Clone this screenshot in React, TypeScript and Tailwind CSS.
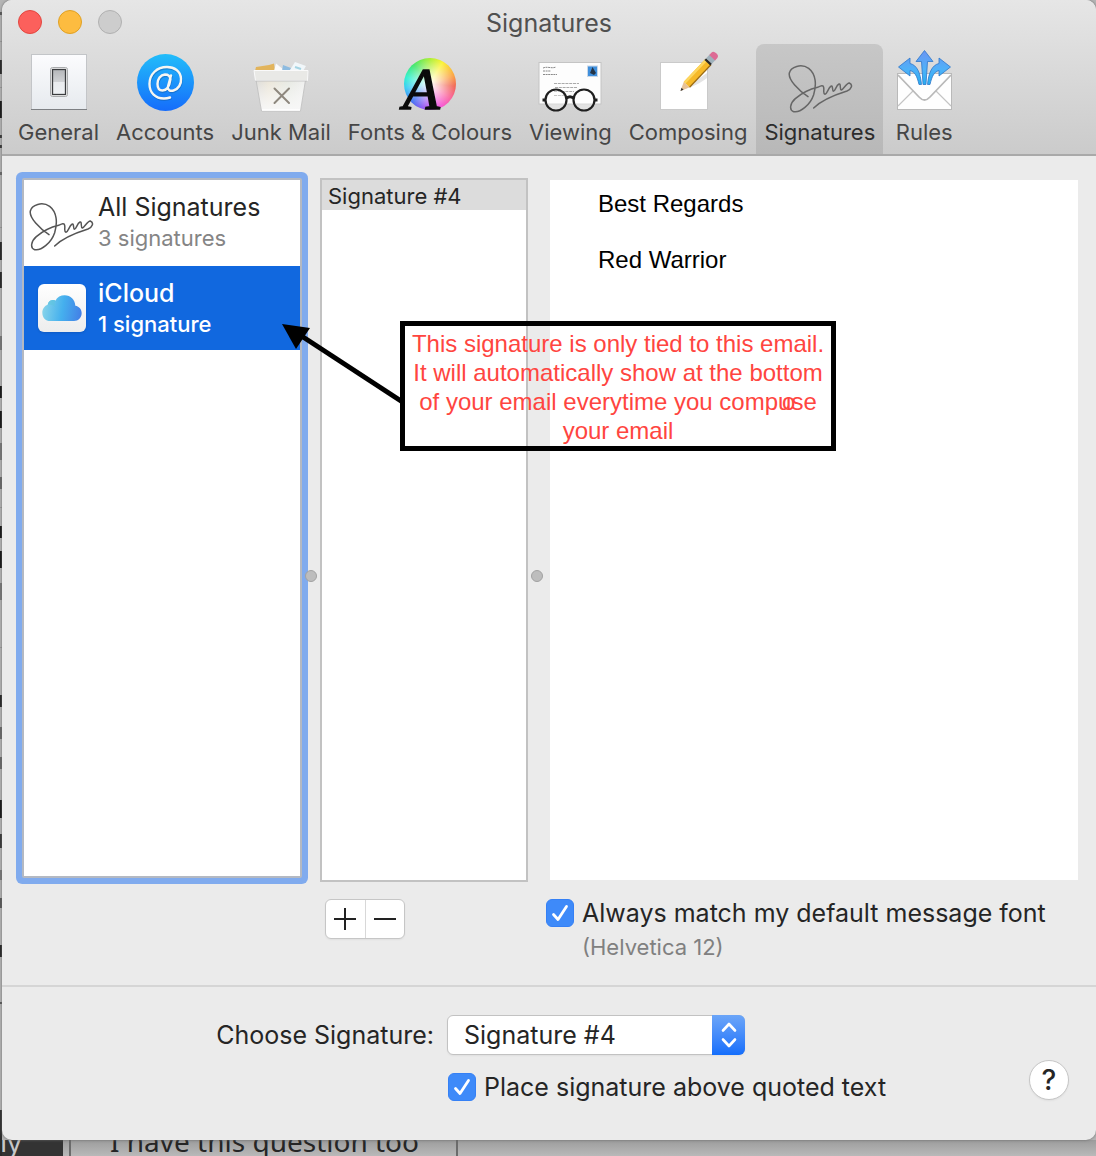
import { useState, type ReactNode } from 'react';

const SIGNATURE_PATH =
  'M63 101C35 83 3 50 7 30C11 11 43 1 65 16C87 33 89 65 80 95C70 125 40 150 20 146C5 141 10 120 25 107C45 90 75 77 92 73C101 69 109 65 110 73C112 83 107 91 114 94C120 93 123 77 131 70C139 65 135 83 139 85C145 85 147 67 156 63C163 61 157 79 163 81C170 79 177 61 187 60C199 65 193 79 180 84C145 95 105 110 80 135';

const AT_PATH =
  'M38 25.500L35 36.500C34.500 40 37 41.500 40.500 40.500C45.500 39 48.500 34 48 28.500C47.500 21 41.500 17 34 17C24 17 16.500 24 16.500 34C16.500 43 22.500 48.500 31 48.500C33.500 48.500 35.500 48 37 47.500M37.500 29C37 26 35 24.500 32 24.500C27.500 25 24.500 29 24.500 34C24.500 38 26.500 40.500 29.500 40.500C33.500 40.500 36.500 36 37.500 29';

// Slivers of the page that is behind the window, [top, height, color]
const BACKDROP_MARKS: [number, number, string][] = [
  [12, 3, '#555'], [41, 1, '#999'], [60, 14, '#222'], [87, 1, '#999'], [101, 17, '#111'],
  [135, 3, '#333'], [145, 3, '#333'], [172, 3, '#666'], [227, 1, '#999'], [242, 18, '#222'],
  [272, 16, '#222'], [336, 14, '#777'], [386, 12, '#111'], [411, 17, '#111'], [443, 17, '#777'],
  [477, 12, '#666'], [507, 1, '#999'], [526, 12, '#111'], [551, 17, '#111'], [583, 17, '#777'],
  [647, 1, '#999'], [695, 12, '#222'], [727, 12, '#666'], [757, 12, '#666'], [800, 18, '#111'],
  [834, 14, '#333'], [870, 10, '#777'], [898, 10, '#555'], [945, 12, '#222'], [1002, 2, '#555'],
  [1110, 46, '#2b2b2b'],
];

function SignatureIcon({ color = '#666' }: { color?: string }) {
  return (
    <svg width="66" height="50" viewBox="0 0 198 150" fill="none" aria-hidden="true">
      <path d={SIGNATURE_PATH} stroke={color} strokeWidth="4.500" strokeLinecap="round" strokeLinejoin="round" />
    </svg>
  );
}

function GeneralIcon() {
  return (
    <svg width="64" height="64" viewBox="0 0 64 64" aria-hidden="true">
      <defs>
        <linearGradient id="plate" x2="0" y2="1">
          <stop stopColor="#fcfcfe" />
          <stop offset="1" stopColor="#e6eaee" />
        </linearGradient>
        <linearGradient id="toggle" x2="0" y2="1">
          <stop stopColor="#b4b6b9" />
          <stop offset="0.48" stopColor="#d0d2d5" />
          <stop offset="0.5" stopColor="#e9ebee" />
          <stop offset="1" stopColor="#eef1f4" />
        </linearGradient>
      </defs>
      <rect x="4.500" y="4.500" width="55" height="55" fill="url(#plate)" stroke="#c3c5c8" />
      <path d="M4 59.500H60" stroke="#7d8083" />
      <rect x="23.500" y="17.500" width="17" height="29" rx="2" fill="#f6f6f6" stroke="#a9abad" />
      <rect x="25.500" y="19.500" width="13" height="25" fill="url(#toggle)" stroke="#3b3d40" strokeWidth="1.300" />
    </svg>
  );
}

function AccountsIcon() {
  return (
    <svg width="64" height="64" viewBox="0 0 64 64" aria-hidden="true">
      <defs>
        <linearGradient id="accounts" x2="0" y2="1">
          <stop stopColor="#22bdfa" />
          <stop offset="1" stopColor="#156cfb" />
        </linearGradient>
      </defs>
      <circle cx="32.500" cy="32.500" r="28.500" fill="url(#accounts)" />
      <g fill="none" strokeLinecap="round" strokeWidth="2.400">
        <path d={AT_PATH} stroke="#135fae" strokeOpacity="0.5" transform="translate(0.500 1.200)" />
        <path d={AT_PATH} stroke="#f6f6f2" />
      </g>
    </svg>
  );
}

function JunkIcon() {
  return (
    <svg width="64" height="64" viewBox="0 0 64 64" aria-hidden="true">
      <defs>
        <linearGradient id="bin">
          <stop stopColor="#dcdcda" />
          <stop offset="0.25" stopColor="#ebe5d8" />
          <stop offset="0.65" stopColor="#e6e9e2" />
          <stop offset="1" stopColor="#efefef" />
        </linearGradient>
        <linearGradient id="binFade" x2="0" y2="1">
          <stop stopColor="#fff" stopOpacity="0" />
          <stop offset="1" stopColor="#f7f7f7" />
        </linearGradient>
      </defs>
      <path d="M6 21L7 17L20 15L25 13.500L26 21Z" fill="#e2b45c" />
      <path d="M25 21L27 13.500L35 20V21Z" fill="#fbfbfb" />
      <path d="M33 21L34 15L42 18L41 21Z" fill="#8dbbe0" />
      <path d="M41 20L46 12L57 16L54 21H41Z" fill="#f1f7fa" />
      <path d="M46 17L52 19" stroke="#a5d4e3" strokeWidth="2" />
      <path d="M7 30L12.500 61H51.500L56.500 30Z" fill="url(#bin)" />
      <path d="M7 30L12.500 61H51.500L56.500 30Z" fill="url(#binFade)" stroke="#bcbcbc" strokeWidth="0.800" />
      <path d="M13 60H51" stroke="#fff" strokeWidth="1.500" />
      <path d="M5 20.500H59L58.500 30.500H6.500Z" fill="#e9e9e6" stroke="#fafafa" />
      <path d="M6.500 31H58" stroke="#bbb" strokeWidth="0.800" />
      <path d="M25.500 38.500L40 53M40 38.500L25.500 53" stroke="#8e887e" strokeWidth="2" strokeLinecap="round" />
    </svg>
  );
}

function FontsIcon() {
  return (
    <span className="relative flex size-16 items-center justify-center pt-1">
      <span className="size-[52px] rounded-full bg-[radial-gradient(circle,#fff_0%,#ffffff99_30%,#ffffff00_72%),conic-gradient(#a8ee2c,#fbf32c_30deg,#fba03c_70deg,#f0604e_95deg,#fa5f9a_125deg,#f54fd8_155deg,#a04cf0_190deg,#3f6cf2_225deg,#2fc8f4_260deg,#29f0d0_285deg,#3ee666_320deg,#a8ee2c)]" />
      <svg className="absolute inset-0 overflow-visible" width="64" height="64" viewBox="0 0 64 64" aria-hidden="true">
        <text
          x="5"
          y="59"
          fontSize="60"
          fontStyle="italic"
          fill="#0b0b0b"
          stroke="#0b0b0b"
          strokeWidth="1.500"
          className="font-['Liberation_Serif',serif]"
        >
          A
        </text>
      </svg>
    </span>
  );
}

function ViewingIcon() {
  return (
    <svg width="64" height="64" viewBox="0 0 64 64" aria-hidden="true">
      <rect x="1" y="12.500" width="62" height="41.500" fill="#fdfdfd" stroke="#c4c4c4" />
      <path d="M5 18C9 16 14 19 18 17M5 21H13M5 24.500H19" stroke="#8a8a8a" strokeDasharray="2 0.600" fill="none" />
      <path d="M16 33.500H41M17 37.500H39M16 41.500H36M16 45.500H26" stroke="#aaa" strokeWidth="1.200" strokeDasharray="3 0.800" />
      <rect x="49.500" y="16" width="10" height="10.500" fill="#3f8fdc" stroke="#c9d8e8" />
      <path d="M54.500 17L52 23L56 25L58 23Z" fill="#243447" />
      <g stroke="#202020" strokeWidth="2.200" fill="#fff" fillOpacity="0.35">
        <circle cx="18" cy="50" r="10.500" />
        <circle cx="46" cy="50" r="10.500" />
        <path d="M28.500 48.500C30 46 34 46 35.500 48.500M4.500 50H8M56 50H59.500" fill="none" strokeWidth="3" />
      </g>
    </svg>
  );
}

function ComposingIcon() {
  return (
    <svg width="64" height="64" viewBox="0 0 64 64" aria-hidden="true">
      <rect x="4.500" y="12.500" width="47" height="47" fill="#fff" stroke="#cacaca" />
      <path d="M26 40C36 37 45 33 51 28V23Z" fill="#e4e4e4" />
      <g transform="translate(24.500 41) rotate(-46.500)">
        <path d="M0 0L9 -4V4Z" fill="#e8c297" />
        <path d="M0 0L3 -1.400V1.400Z" fill="#333" />
        <rect x="9" y="-4" width="31" height="8" fill="#f6b929" />
        <rect x="9" y="-4" width="31" height="2.500" fill="#fdd65e" />
        <path d="M9 4H40" stroke="#9b6a12" strokeWidth="1.200" />
        <rect x="39" y="-4" width="2.500" height="8" fill="#2b2b2b" />
        <rect x="41.500" y="-4" width="5" height="8" fill="#9fb1bb" />
        <path d="M46 -4H49Q52 -4 52 0T49 4H46Z" fill="#dd6b95" />
      </g>
    </svg>
  );
}

function RulesIcon() {
  return (
    <svg width="64" height="64" viewBox="0 0 64 64" aria-hidden="true">
      <defs>
        <linearGradient id="arrows" gradientUnits="userSpaceOnUse" x1="0" y1="0" x2="0" y2="35">
          <stop stopColor="#6b94f3" />
          <stop offset="0.55" stopColor="#4fb1f8" />
          <stop offset="1" stopColor="#27aef0" />
        </linearGradient>
      </defs>
      <rect x="5.500" y="23.500" width="54" height="36" fill="#fefefe" stroke="#b9b9b9" />
      <path d="M6 56L21 41M59 56L44 41" stroke="#c4c4c4" strokeWidth="1.200" />
      <path d="M6 25L27 47Q32.500 53 38 47L59 25" fill="none" stroke="#b9b9b9" strokeWidth="1.800" />
      <g fill="url(#arrows)" stroke="#2d76c9" strokeWidth="0.800">
        <path d="M32.500 0.500L41 11.500H35.500L34 34.500H31L29.500 11.500H24Z" />
        <path d="M6.500 17L18 8V13.500C25 15 28.500 23 29.500 34.500H27C25 26 23 22 18 20.500V26Z" />
        <path d="M58.500 17L47 8V13.500C40 15 36.500 23 35.500 34.500H38C40 26 42 22 47 20.500V26Z" />
      </g>
    </svg>
  );
}

function CloudIcon() {
  return (
    <span className="flex size-12 items-center justify-center rounded-md bg-linear-to-b from-white to-[#ededed] shadow-sm">
      <svg width="40" height="26" viewBox="0 0 120 78" aria-hidden="true">
        <defs>
          <linearGradient id="cloud" x1="0" y1="0.600" x2="1" y2="0.700">
            <stop stopColor="#86d3ea" />
            <stop offset="0.500" stopColor="#45b0ee" />
            <stop offset="1" stopColor="#437fe6" />
          </linearGradient>
        </defs>
        <path d="M25 78C10 78 1 67 1 53C1 41 8 32 17 29C18 19 26 14 34 15C38 15 39 17 40 17C46 6 56 1 68 1C86 1 99 14 100 32C112 34 119 43 119 54C119 68 109 78 96 78Z" fill="url(#cloud)" />
        <path d="M17 29C18 19 26 14 34 15C38 15 39 17 40 17C36 25 37 32 41 38C34 28 24 27 17 29Z" fill="#5fc5dd" opacity="0.6" />
      </svg>
    </span>
  );
}

const TABS: { name: string; icon: ReactNode }[] = [
  { name: 'General', icon: <GeneralIcon /> },
  { name: 'Accounts', icon: <AccountsIcon /> },
  { name: 'Junk Mail', icon: <JunkIcon /> },
  { name: 'Fonts & Colours', icon: <FontsIcon /> },
  { name: 'Viewing', icon: <ViewingIcon /> },
  { name: 'Composing', icon: <ComposingIcon /> },
  { name: 'Signatures', icon: <SignatureIcon /> },
  { name: 'Rules', icon: <RulesIcon /> },
];

function Checkbox({ id, label }: { id: string; label: string }) {
  const [checked, setChecked] = useState(true);
  return (
    <div className="flex items-center gap-2">
      <span className="relative flex size-7 shrink-0">
        <input
          id={id}
          type="checkbox"
          checked={checked}
          onChange={(e) => setChecked(e.target.checked)}
          className="size-7 appearance-none rounded-md border border-[#bbb] bg-white checked:border-[#3580f5] checked:bg-[#3e8af9]"
        />
        {checked && (
          <svg className="pointer-events-none absolute inset-0" width="28" height="28" viewBox="0 0 28 28" fill="none" aria-hidden="true">
            <path d="M7.500 15.500L12 20.500L20.500 7.500" stroke="#fff" strokeWidth="2.800" strokeLinecap="round" strokeLinejoin="round" />
          </svg>
        )}
      </span>
      <label htmlFor={id} className="text-[25px] leading-[30px] whitespace-nowrap">
        {label}
      </label>
    </div>
  );
}

function Splitter() {
  return (
    <div className="flex w-[18px] shrink-0 items-center justify-center pt-[92px]">
      <span className="size-3 rounded-full border border-[#a2a2a2] bg-[#bdbdbd]" />
    </div>
  );
}

function Callout() {
  return (
    <div className="pointer-events-none absolute top-[165px] left-[280px] flex">
      <svg className="-mr-1 shrink-0" width="122" height="90" viewBox="0 0 122 90" aria-hidden="true">
        <path d="M18 14L122 82" stroke="#000" strokeWidth="5" />
        <path d="M0 3L28 7L14 28Z" />
      </svg>
      <p className="w-[436px] border-5 border-black px-1 pt-[3px] pb-px text-center font-['Liberation_Sans',Arial,sans-serif] text-2xl leading-[29px] text-[#ff4540]">
        This signature is only tied to this email.
        <br />
        It will automatically show at the bottom
        <br />
        of your email everytime you comp
        <span className="relative">
          u<span className="absolute -top-px left-1" aria-hidden="true">o</span>
        </span>
        se
        <br />
        your email
      </p>
    </div>
  );
}

export default function App() {
  const [tab, setTab] = useState('Signatures');
  const [account, setAccount] = useState('iCloud');

  return (
    <div className="relative flex min-h-screen flex-col overflow-hidden bg-[#b5b5b5] pl-[2px] font-[Inter,sans-serif] text-[#252525]">
      <svg className="absolute top-0 left-0 h-full w-[2px]" aria-hidden="true">
        {BACKDROP_MARKS.map(([top, height, color]) => (
          <rect key={top} y={top} width="2" height={height} fill={color} />
        ))}
      </svg>

      <div className="relative z-10 flex flex-1 flex-col overflow-hidden rounded-[10px] bg-[#ebebeb] shadow-[0_0_3px_#666]">
        <header className="border-b-2 border-[#a9a9a9] bg-linear-to-b from-[#e6e6e6] to-[#cbcbcb]">
          <div className="relative flex h-11 items-center justify-center">
            <div className="absolute left-4 flex gap-4">
              <button aria-label="Close" className="size-6 rounded-full border border-[#e2463f] bg-[#fc605c]" />
              <button aria-label="Minimise" className="size-6 rounded-full border border-[#dfa023] bg-[#fdbc40]" />
              <button aria-label="Zoom" disabled className="size-6 rounded-full border border-[#b0b0b0] bg-[#cdcdcd]" />
            </div>
            <h1 className="pt-0.5 text-[25px] leading-[30px] text-[#505050]">Signatures</h1>
          </div>
          <nav className="flex gap-px pl-2">
            {TABS.map((t) => (
              <button
                key={t.name}
                onClick={() => setTab(t.name)}
                className={`flex h-[110px] flex-col items-center gap-1 rounded-t-lg px-2 pt-[6px] text-[22px] leading-7 whitespace-nowrap ${
                  tab === t.name ? 'bg-linear-to-b from-[#c7c7c7] to-[#b8b8b8] text-[#2c2c2c]' : 'text-[#464646]'
                }`}
              >
                <span className={`flex h-16 items-center ${t.name === 'Signatures' ? 'pt-3' : ''}`}>{t.icon}</span>
                {t.name}
              </button>
            ))}
          </nav>
        </header>

        <main className="relative flex flex-1 pt-[22px] pr-[18px] pl-5">
          <div className="mb-1 w-[280px] shrink-0 rounded-xs border-2 border-[#b4b9c2] bg-white ring-6 ring-[#80abee]">
            <button
              onClick={() => setAccount('All Signatures')}
              className={`flex h-[86px] w-full items-center gap-1 pb-0.5 pl-1 text-left ${
                account === 'All Signatures' ? 'bg-[#1168df] text-white' : ''
              }`}
            >
              <span className="pt-2">
                <SignatureIcon color={account === 'All Signatures' ? '#fff' : '#555'} />
              </span>
              <span>
                <span className="block text-[25px] leading-8">All Signatures</span>
                <span className={`block text-[22px] leading-[30px] ${account === 'All Signatures' ? '' : 'text-[#858585]'}`}>
                  3 signatures
                </span>
              </span>
            </button>
            <button
              onClick={() => setAccount('iCloud')}
              className={`flex h-[84px] w-full items-center gap-3 pl-[14px] text-left ${
                account === 'iCloud' ? 'bg-[#1168df] text-white' : ''
              }`}
            >
              <CloudIcon />
              <span>
                <span className="block text-[25px] leading-8 font-medium">iCloud</span>
                <span className="block text-[22px] leading-[30px] font-medium">1 signature</span>
              </span>
            </button>
          </div>
          <Splitter />
          <ul className="w-[208px] shrink-0 border-2 border-[#c2c2c2] bg-white">
            <li className="bg-[#dcdcdc] pt-0.5 pl-[6px] text-[22px] leading-7">Signature #4</li>
          </ul>
          <Splitter />
          <div
            contentEditable
            suppressContentEditableWarning
            role="textbox"
            aria-label="Signature text"
            className="mt-[2px] mb-[2px] ml-1 flex-1 bg-white px-12 py-[10px] font-['Liberation_Sans',Arial,sans-serif] text-2xl leading-7 text-black"
          >
            <p>Best Regards</p>
            <p>
              <br />
            </p>
            <p>Red Warrior</p>
          </div>
          <Callout />
        </main>

        <section className="flex items-start pt-4 pb-[23px] pl-[323px]">
          <div className="mt-px flex h-10 w-20 shrink-0 divide-x divide-[#d8d8d8] overflow-hidden rounded-md border border-[#c6c6c6] bg-white shadow-xs">
            <button aria-label="Add signature" className="flex flex-1 items-center justify-center">
              <svg width="22" height="22" viewBox="0 0 22 22" aria-hidden="true">
                <path d="M0 11H22M11 0V22" stroke="#222" strokeWidth="2" />
              </svg>
            </button>
            <button aria-label="Remove signature" className="flex flex-1 items-center justify-center">
              <svg width="22" height="22" viewBox="0 0 22 22" aria-hidden="true">
                <path d="M0 11H22" stroke="#222" strokeWidth="2" />
              </svg>
            </button>
          </div>
          <div className="ml-[141px]">
            <Checkbox id="match-font" label="Always match my default message font" />
            <p className="pt-1 pl-9 text-[22px] leading-[30px] text-[#808080]">(Helvetica 12)</p>
          </div>
        </section>

        <footer className="flex items-end justify-between border-t-2 border-[#d5d5d5] pt-7 pr-[27px] pb-[38px]">
          <div className="flex flex-col gap-[17px]">
            <div className="flex items-center">
              <label htmlFor="choose" className="w-[432px] text-right text-[25px] leading-[30px]">
                Choose Signature:
              </label>
              <div className="relative ml-[13px] h-10 w-[298px]">
                <select
                  id="choose"
                  defaultValue="Signature #4"
                  className="h-10 w-full appearance-none rounded-md border border-[#c2c2c2] bg-white pl-4 text-[25px] leading-[30px] shadow-xs"
                >
                  <option>None</option>
                  <option>Signature #4</option>
                </select>
                <span className="pointer-events-none absolute top-0 right-0 flex h-10 w-[33px] items-center justify-center rounded-r-md bg-linear-to-b from-[#6ba5f8] to-[#136efb]">
                  <svg width="18" height="26" viewBox="0 0 18 26" fill="none" aria-hidden="true">
                    <path d="M3 8.500L9 2L15 8.500M3 17.500L9 24L15 17.500" stroke="#fff" strokeWidth="2.600" strokeLinecap="round" strokeLinejoin="round" />
                  </svg>
                </span>
              </div>
            </div>
            <div className="pl-[446px]">
              <Checkbox id="above-quoted" label="Place signature above quoted text" />
            </div>
          </div>
          <button aria-label="Help" className="mb-0.5 size-10 rounded-full border border-[#c6c6c6] bg-white text-[28px] leading-9 font-medium shadow-xs">
            ?
          </button>
        </footer>
      </div>

      <div className="-ml-[2px] flex h-4 shrink-0 items-end overflow-hidden bg-linear-to-b from-[#9c9c9c] to-[#b9b9b9] font-['Noto_Sans',sans-serif] text-[28px] leading-[30px]">
        <span className="w-[63px] bg-[#333] text-[#c8c8c8]">ly</span>
        <span className="ml-[6px] w-[389px] border-x-2 border-[#6b6b6b] pl-[39px] whitespace-nowrap">I have this question too</span>
      </div>
    </div>
  );
}
